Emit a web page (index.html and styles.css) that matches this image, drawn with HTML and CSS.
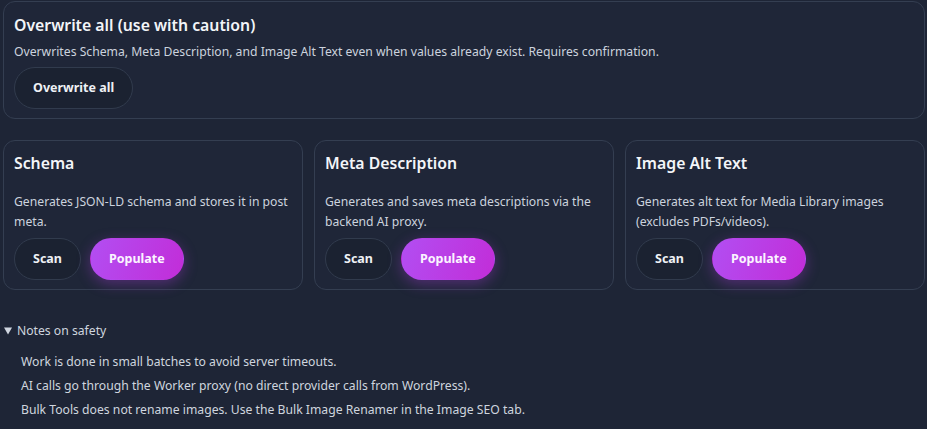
FILE: index.html
```html
<!DOCTYPE html>
<html lang="en">
<head>
<meta charset="utf-8">
<title>Bulk Tools</title>
<link rel="stylesheet" href="styles.css">
</head>
<body>
<div class="page">
  <section class="card card-wide">
    <h2 class="card-title">Overwrite all (use with caution)</h2>
    <p class="card-desc">Overwrites Schema, Meta Description, and Image Alt Text even when values already exist. Requires confirmation.</p>
    <div class="actions">
      <button class="btn btn-ghost">Overwrite all</button>
    </div>
  </section>

  <div class="grid">
    <section class="card">
      <h2 class="card-title">Schema</h2>
      <p class="card-desc card-desc-tall">Generates JSON-LD schema and stores it in post meta.</p>
      <div class="actions">
        <button class="btn btn-ghost">Scan</button>
        <button class="btn btn-primary">Populate</button>
      </div>
    </section>
    <section class="card">
      <h2 class="card-title">Meta Description</h2>
      <p class="card-desc card-desc-tall">Generates and saves meta descriptions via the backend AI proxy.</p>
      <div class="actions">
        <button class="btn btn-ghost">Scan</button>
        <button class="btn btn-primary">Populate</button>
      </div>
    </section>
    <section class="card">
      <h2 class="card-title">Image Alt Text</h2>
      <p class="card-desc card-desc-tall">Generates alt text for Media Library images (excludes PDFs/videos).</p>
      <div class="actions">
        <button class="btn btn-ghost">Scan</button>
        <button class="btn btn-primary">Populate</button>
      </div>
    </section>
  </div>

  <details class="notes" open>
    <summary>Notes on safety</summary>
    <ul class="notes-list">
      <li>Work is done in small batches to avoid server timeouts.</li>
      <li>AI calls go through the Worker proxy (no direct provider calls from WordPress).</li>
      <li>Bulk Tools does not rename images. Use the Bulk Image Renamer in the Image SEO tab.</li>
    </ul>
  </details>
</div>
</body>
</html>
```

FILE: styles.css
```css
* { box-sizing: border-box; }

html, body {
  margin: 0;
  background: #1e2536;
}

body {
  font-family: "Noto Sans", "Open Sans", sans-serif;
  color: #e5e9f0;
  font-size: 12.2px;
}

.page {
  padding: 1px 2px 0 3px;
}

.card {
  background: #1f2638;
  border: 1px solid #343e51;
  border-radius: 12px;
  padding: 11px 10px 9px 10px;
}

.card-wide {
  padding-top: 12px;
}

.card-title {
  margin: 0;
  font-size: 15.8px;
  line-height: 22px;
  font-weight: 600;
  color: #f3f5f8;
}

.card-desc {
  margin: 6px 0 5px;
  font-size: 12.2px;
  line-height: 20px;
  color: #ccd3de;
}

.card-desc-tall {
  margin: 18px 0 6px;
  min-height: 40px;
}

.actions {
  display: flex;
  gap: 9px;
}

.btn {
  font-family: inherit;
  font-size: 12.5px;
  line-height: 16px;
  font-weight: 700;
  border-radius: 999px;
  padding: 12px 18px;
  cursor: pointer;
}

.btn-ghost {
  background: #1b2231;
  color: #eef1f5;
  border: 1px solid #313b4d;
}

.btn-primary {
  color: #fbf4ff;
  border: 1px solid transparent;
  background: linear-gradient(110deg, #b24ef2 0%, #c22dd8 100%);
  box-shadow: 0 4px 14px rgba(180, 60, 230, 0.35);
}

.grid {
  margin-top: 21px;
  display: grid;
  grid-template-columns: repeat(3, 1fr);
  gap: 11px;
}

.notes {
  margin-top: 31px;
  color: #cfd5df;
  font-size: 12.2px;
}

.notes summary {
  line-height: 20px;
  cursor: pointer;
  padding-left: 1px;
}

.notes-list {
  list-style: none;
  margin: 11px 0 0;
  padding-left: 18px;
}

.notes-list li {
  line-height: 20px;
  margin-bottom: 4px;
}
```
